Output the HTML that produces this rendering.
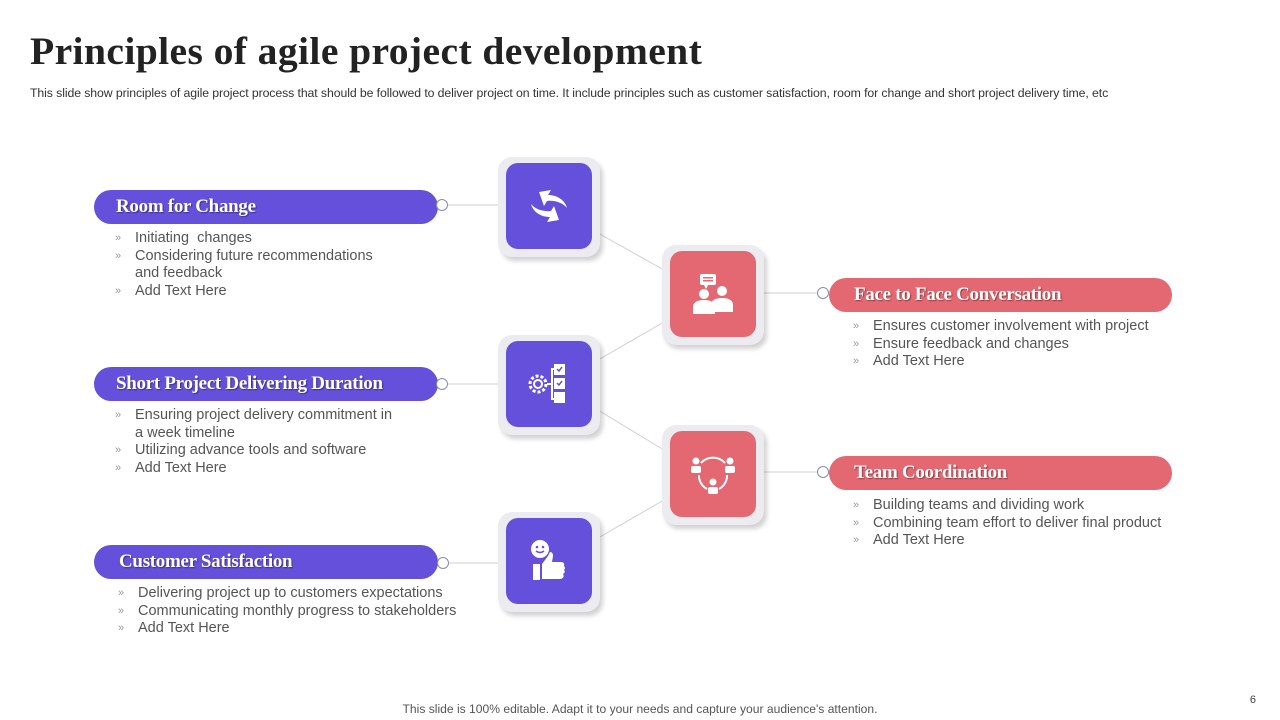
<!DOCTYPE html>
<html><head><meta charset="utf-8"><style>
*{margin:0;padding:0;box-sizing:border-box}
body{width:1280px;height:720px;background:#fff;position:relative;overflow:hidden;font-family:"Liberation Sans",sans-serif}
.t{position:absolute;left:30px;top:28px;font-family:"Liberation Serif",serif;font-weight:bold;font-size:39.6px;color:#222;letter-spacing:0.4px}
.sub{position:absolute;left:30px;top:86px;font-size:12.3px;color:#333;white-space:nowrap;letter-spacing:-0.1px}
.pill{position:absolute;height:34px;border-radius:17px;color:#fff;font-family:"Liberation Serif",serif;font-weight:bold;font-size:19px;line-height:34px;padding-left:22px;text-shadow:1px 1px 1px rgba(0,0,0,.4);letter-spacing:-0.3px}
.pu{background:#6450da}.pk{background:#e36872}
.dot{position:absolute;width:12px;height:12px;border:1px solid #8a8ab0;border-radius:50%;background:#fff}
.ul{position:absolute;list-style:none;font-size:14.5px;color:#555;line-height:17.6px}
.ul li{padding-left:20px;position:relative}
.ul li:before{content:"»";position:absolute;left:0;top:0;font-size:11px;color:#999}
.frame{position:absolute;width:102px;height:100px;border-radius:14px;background:#ececf0;box-shadow:3px 4px 5px rgba(0,0,0,.18)}
.box{position:absolute;left:8px;top:6px;width:86px;height:86px;border-radius:12px;display:flex;align-items:center;justify-content:center}
.foot{position:absolute;top:702px;left:0;width:1280px;text-align:center;font-size:12.1px;color:#555}
.pg{position:absolute;right:24px;top:694px;font-size:11px;color:#444}
svg.lines{position:absolute;left:0;top:0}
</style></head><body>
<div class="t">Principles of agile project development</div>
<div class="sub">This slide show principles of agile project process that should be followed to deliver project on time. It include principles such as customer satisfaction, room for change and short project delivery time, etc</div>

<svg class="lines" width="1280" height="720">
<g stroke="#cfcfd6" stroke-width="1">
<line x1="448" y1="205" x2="498" y2="205"/>
<line x1="448" y1="384" x2="498" y2="384"/>
<line x1="449" y1="563" x2="498" y2="563"/>
<line x1="598" y1="233" x2="664" y2="270"/>
<line x1="598" y1="360" x2="664" y2="322"/>
<line x1="598" y1="410" x2="664" y2="450"/>
<line x1="598" y1="538" x2="664" y2="500"/>
<line x1="762" y1="293" x2="817" y2="293"/>
<line x1="762" y1="472" x2="817" y2="472"/>
</g></svg>

<div class="pill pu" style="left:94px;top:190px;width:344px">Room for Change</div>
<div class="dot" style="left:436px;top:199px"></div>
<ul class="ul" style="left:115px;top:230px"><li>Initiating&nbsp; changes</li><li>Considering future recommendations<br>and feedback</li><li>Add Text Here</li></ul>

<div class="pill pu" style="left:94px;top:367px;width:344px">Short Project Delivering Duration</div>
<div class="dot" style="left:436px;top:378px"></div>
<ul class="ul" style="left:115px;top:407px"><li>Ensuring project delivery commitment in<br>a week timeline</li><li>Utilizing advance tools and software</li><li>Add Text Here</li></ul>

<div class="pill pu" style="left:94px;top:545px;width:344px;padding-left:25px">Customer Satisfaction</div>
<div class="dot" style="left:437px;top:557px"></div>
<ul class="ul" style="left:118px;top:585px"><li>Delivering project up to customers expectations</li><li>Communicating monthly progress to stakeholders</li><li>Add Text Here</li></ul>

<div class="pill pk" style="left:829px;top:278px;width:343px;padding-left:25px">Face to Face Conversation</div>
<div class="dot" style="left:817px;top:287px"></div>
<ul class="ul" style="left:853px;top:318px"><li>Ensures customer involvement with project</li><li>Ensure feedback and changes</li><li>Add Text Here</li></ul>

<div class="pill pk" style="left:829px;top:456px;width:343px;padding-left:25px">Team Coordination</div>
<div class="dot" style="left:817px;top:466px"></div>
<ul class="ul" style="left:853px;top:497px"><li>Building teams and dividing work</li><li>Combining team effort to deliver final product</li><li>Add Text Here</li></ul>

<div class="frame" style="left:498px;top:157px"><div class="box pu">
<svg width="48" height="40" viewBox="0 0 48 40" fill="#fff"><path d="M14 6 L26 4 L23 9 C32 9 40 14 42 22 C38 17 30 14 22 15 L19 20 Z"/><path d="M34 34 L22 36 L25 31 C16 31 8 26 6 18 C10 23 18 26 26 25 L29 20 Z"/></svg>
</div></div>
<div class="frame" style="left:662px;top:245px"><div class="box pk">
<svg width="46" height="44" viewBox="0 0 46 44" fill="#fff"><rect x="10" y="2" width="16" height="11" rx="2"/><path d="M14 13 l2 4 l2 -4z"/><circle cx="14" cy="22" r="5"/><path d="M3 42 v-7 c0 -5 5 -7 11 -7 c6 0 11 2 11 7 v7z"/><circle cx="32" cy="19" r="5"/><path d="M21 40 v-7 c0 -5 5 -7 11 -7 c6 0 11 2 11 7 v7z"/><rect x="13" y="5" width="10" height="1.5" fill="#e36872"/><rect x="13" y="8" width="10" height="1.5" fill="#e36872"/></svg>
</div></div>
<div class="frame" style="left:498px;top:335px"><div class="box pu">
<svg width="50" height="46" viewBox="0 0 50 46" fill="none" stroke="#fff" stroke-width="2"><circle cx="14" cy="23" r="8" stroke-dasharray="3 2" stroke-width="3"/><circle cx="14" cy="23" r="4"/><path d="M23 23 h5 M30 8 h-2 v30 h2"/><rect x="31" y="4" width="9" height="9" fill="#fff"/><rect x="31" y="18" width="9" height="9" fill="#fff"/><rect x="31" y="32" width="9" height="9" fill="#fff"/><path d="M33 8 l2 2 l3 -4 M33 22 l2 2 l3 -4" stroke="#6450da" stroke-width="1.5"/></svg>
</div></div>
<div class="frame" style="left:662px;top:425px"><div class="box pk">
<svg width="48" height="46" viewBox="0 0 48 46" fill="#fff"><path d="M12 12 A16 16 0 0 1 36 12 M10 24 A15 15 0 0 0 18 38 M38 24 A15 15 0 0 1 30 38" stroke="#fff" stroke-width="2" fill="none"/><circle cx="7" cy="10" r="3.5"/><rect x="2" y="15" width="10" height="7" rx="2"/><circle cx="41" cy="10" r="3.5"/><rect x="36" y="15" width="10" height="7" rx="2"/><circle cx="24" cy="31" r="3.5"/><rect x="19" y="36" width="10" height="7" rx="2"/></svg>
</div></div>
<div class="frame" style="left:498px;top:512px"><div class="box pu">
<svg width="46" height="46" viewBox="0 0 46 46" fill="#fff"><circle cx="14" cy="11" r="9"/><circle cx="11" cy="9" r="1.3" fill="#6450da"/><circle cx="17" cy="9" r="1.3" fill="#6450da"/><path d="M10 13 q4 3 8 0" stroke="#6450da" stroke-width="1.5" fill="none"/><rect x="7" y="26" width="7" height="16"/><path d="M16 26 L22 18 L24 14 Q27 14 27 18 L26 24 L36 24 Q39 25 38 28 Q40 30 38 32 Q40 34 37 36 Q39 39 35 41 L16 41 Z"/></svg>
</div></div>

<div class="foot">This slide is 100% editable. Adapt it to your needs and capture your audience's attention.</div>
<div class="pg">6</div>
</body></html>
